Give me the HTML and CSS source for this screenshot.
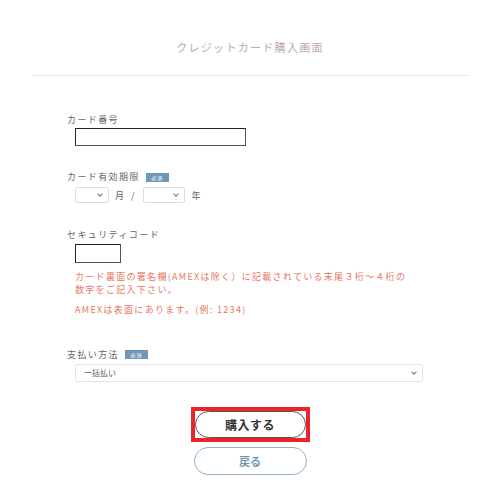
FILE: index.html
```html
<!DOCTYPE html>
<html lang="ja">
<head>
<meta charset="utf-8">
<link rel="stylesheet" href="styles.css">
</head>
<body>
<header class="header">
  <h1 class="title">クレジットカード購入画面</h1>
</header>
<hr class="divider">
<form class="form">
  <div class="field field-card">
    <div class="label">カード番号</div>
    <input class="text-input card-input" type="text">
  </div>
  <div class="field field-expiry">
    <div class="label">カード有効期限<span class="badge">必須</span></div>
    <div class="expiry-row">
      <span class="select-wrap sel-month"><select class="select"><option></option></select></span>
      <span class="unit">月</span>
      <span class="slash">/</span>
      <span class="select-wrap sel-year"><select class="select"><option></option></select></span>
      <span class="unit">年</span>
    </div>
  </div>
  <div class="field field-cvc">
    <div class="label">セキュリティコード</div>
    <input class="text-input cvc-input" type="text">
    <p class="note note-1">カード裏面の署名欄(AMEXは除く）に記載されている末尾３桁〜４桁の数字をご記入下さい。</p>
    <p class="note note-2">AMEXは表面にあります。(例: 1234)</p>
  </div>
  <div class="field field-pay">
    <div class="label">支払い方法<span class="badge">必須</span></div>
    <span class="select-wrap sel-pay"><select class="select pay-select"><option>一括払い</option></select></span>
  </div>
  <div class="buttons">
    <div class="focus-frame"><button type="button" class="btn btn-buy">購入する</button></div>
    <button type="button" class="btn btn-back">戻る</button>
  </div>
</form>
</body>
</html>
```
FILE: styles.css
```css
* { box-sizing: border-box; }
html, body { margin: 0; padding: 0; background: #fff; }
body {
  font-family: "Noto Sans CJK JP", "Noto Sans", sans-serif;
  color: #555;
  width: 500px;
}
.header { padding-top: 39px; }
.title {
  margin: 0;
  text-align: center;
  font-size: 11px;
  line-height: 16px;
  font-weight: normal;
  letter-spacing: 1.3px;
  color: #bcaaa2;
}
.divider {
  margin: 20px 32px 0;
  border: 0;
  border-top: 1px solid #e8e8e8;
  height: 0;
}
.form { padding-left: 67px; padding-right: 75px; }
.label {
  display: flex;
  align-items: center;
  font-size: 9px;
  line-height: 12px;
  height: 12px;
  letter-spacing: 1.4px;
  color: #666;
}
.badge {
  display: inline-block;
  margin-left: 6px;
  width: 23px;
  height: 9px;
  line-height: 9px;
  background: #6f98b8;
  color: #fff;
  font-size: 5px;
  letter-spacing: 1px;
  text-align: center;
}
.text-input {
  display: block;
  margin-left: 8px;
  border: 1px solid #333;
  border-top-color: #222;
  border-left-color: #222;
  border-bottom-color: #555;
  border-right-color: #555;
  background: #fff;
  padding: 0;
}
.field-card { margin-top: 38px; }
.card-input { margin-top: 2px; width: 171px; height: 18px; }
.field-expiry { margin-top: 25px; }
.expiry-row {
  display: flex;
  align-items: center;
  margin-top: 4px;
  margin-left: 8px;
  height: 16px;
  font-size: 9px;
  color: #666;
}
.select-wrap { position: relative; display: inline-block; }
.select-wrap::after {
  content: "";
  position: absolute;
  top: 50%;
  right: 7px;
  width: 3px;
  height: 3px;
  margin-top: -3px;
  border-right: 1px solid #777;
  border-bottom: 1px solid #777;
  transform: rotate(45deg);
  pointer-events: none;
}
.select {
  -webkit-appearance: none;
  appearance: none;
  display: block;
  height: 16px;
  border: 1px solid #ddd;
  border-radius: 2px;
  background: #fff;
  padding: 0 0 0 7px;
  font-family: inherit;
  font-size: 8px;
  color: #555;
  outline: none;
}
.sel-month .select { width: 34px; }
.sel-year .select { width: 42px; }
.unit { margin-left: 6px; }
.slash { margin-left: 7px; margin-right: 8px; }
.sel-year + .unit { margin-left: 7px; }
.field-cvc { margin-top: 26px; }
.cvc-input { margin-top: 3px; width: 46px; height: 19px; }
.note {
  margin: 0 0 0 8px;
  width: 334px;
  font-size: 9px;
  line-height: 13.4px;
  letter-spacing: 1.3px;
  color: #e9775f;
}
.note-1 { margin-top: 7px; }
.note-2 { margin-top: 6.6px; }
.field-pay { margin-top: 32px; }
.sel-pay { margin-top: 3px; margin-left: 8px; display: block; width: 348px; }
.pay-select { width: 348px; height: 18px; padding-left: 8px; border-color: #e3e3e3; }
.sel-pay::after { right: 7px; }
.buttons {
  display: flex;
  flex-direction: column;
  align-items: center;
  margin-top: 25px;
  margin-left: -67px;
  margin-right: -75px;
}
.focus-frame {
  border: 4px solid #e8262a;
  line-height: 0;
}
.btn {
  display: block;
  border-radius: 14px;
  background: #fff;
  font-family: inherit;
  font-weight: bold;
  padding: 0;
  cursor: pointer;
}
.btn-buy {
  width: 111px;
  height: 27px;
  border: 1px solid #555;
  font-size: 12px;
  line-height: 25px;
  color: #333;
  letter-spacing: 0.5px;
}
.btn-back {
  margin-top: 5px;
  width: 113px;
  height: 28px;
  border: 1px solid #8fb1cb;
  font-size: 11px;
  color: #7195b0;
}
```
